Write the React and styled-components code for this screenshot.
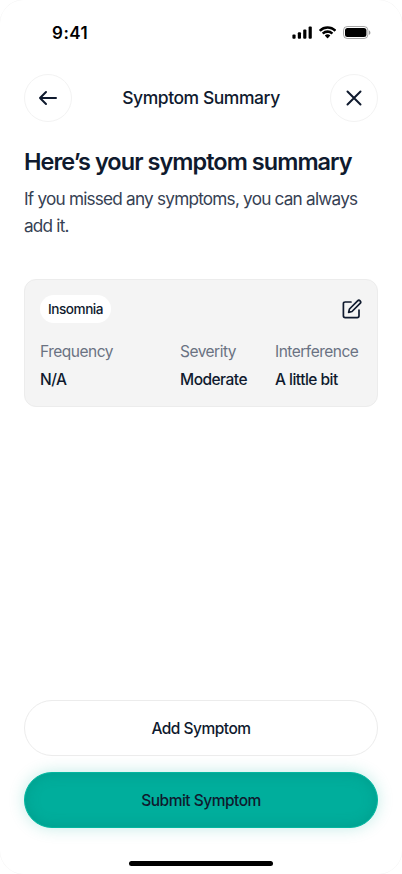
import React from "react";
import styled, { createGlobalStyle } from "styled-components";

const GlobalStyle = createGlobalStyle`
  * {
    box-sizing: border-box;
  }

  body {
    margin: 0;
    background: #ffffff;
    font-family: "Inter", sans-serif;
    color: #0f1a2e;
  }
`;

const Screen = styled.div`
  display: flex;
  flex-direction: column;
  width: 402px;
  height: 874px;
  margin: 0 auto;
  overflow: hidden;
  background: #ffffff;
  border-radius: 24px;
  box-shadow: 0 0 0 0.5px rgba(0, 0, 0, 0.04);
`;

const StatusBar = styled.div`
  display: flex;
  justify-content: space-between;
  align-items: center;
  height: 66px;
  padding: 0 31px 0 52px;
`;

const Time = styled.span`
  font-size: 17px;
  font-weight: 600;
  line-height: 22px;
  letter-spacing: 0.03em;
  color: #000000;
`;

const StatusIcons = styled.div`
  display: flex;
  align-items: center;
  gap: 7px;
  margin-top: -1px;
  color: #000000;

  svg {
    display: block;
  }
`;

const Header = styled.header`
  display: flex;
  justify-content: space-between;
  align-items: center;
  padding: 8px 24px 0;
`;

const RoundButton = styled.button`
  display: flex;
  align-items: center;
  justify-content: center;
  width: 48px;
  height: 48px;
  padding: 0;
  border: 1px solid #f3f3f3;
  border-radius: 50%;
  background: #ffffff;
  color: #0f1a2e;
`;

const Title = styled.h1`
  margin: 0;
  font-size: 17.5px;
  font-weight: 500;
  line-height: 24px;
  letter-spacing: -0.45px;
`;

const Content = styled.main`
  flex: 1;
  padding: 24px 24px 0;
`;

const Heading = styled.h2`
  margin: 0;
  font-size: 23.5px;
  font-weight: 600;
  line-height: 32px;
  letter-spacing: -0.96px;
`;

const Description = styled.p`
  margin: 7px 0 0;
  font-size: 17.2px;
  line-height: 27px;
  letter-spacing: -0.79px;
  color: #364153;
`;

const Card = styled.section`
  height: 128px;
  margin-top: 40px;
  padding: 15px;
  border: 1px solid #ececec;
  border-radius: 12px;
  background: #f4f4f4;
`;

const CardTop = styled.div`
  display: flex;
  justify-content: space-between;
  align-items: center;
`;

const Chip = styled.span`
  padding: 0 8px;
  border-radius: 14px;
  background: #ffffff;
  font-size: 13.6px;
  font-weight: 500;
  line-height: 28px;
  letter-spacing: -0.47px;
`;

const EditButton = styled.button`
  display: flex;
  padding: 0;
  border: 0;
  background: none;
  color: #0f1a2e;
`;

const Details = styled.div`
  display: grid;
  grid-template-columns: 140px 95px 1fr;
  margin-top: 17px;
`;

const Label = styled.div`
  font-size: 15.5px;
  line-height: 24px;
  letter-spacing: -0.5px;
  white-space: nowrap;
  color: #6a7282;
`;

const Value = styled.div`
  margin-top: 4px;
  font-size: 15.5px;
  font-weight: 500;
  line-height: 24px;
  letter-spacing: -0.52px;
  white-space: nowrap;
`;

const Actions = styled.div`
  display: flex;
  flex-direction: column;
  gap: 16px;
  padding: 0 24px;
`;

const ActionButton = styled.button`
  height: 56px;
  padding: 2px 0 0;
  border: 1px solid ${({ $primary }) => ($primary ? "#04b69f" : "#ececec")};
  border-radius: 28px;
  background: ${({ $primary }) => ($primary ? "#00ae9c" : "#ffffff")};
  box-shadow: ${({ $primary }) =>
    $primary
      ? "0 0 16px rgba(0, 174, 156, 0.24), inset 0 0 14px rgba(0, 110, 95, 0.26)"
      : "none"};
  color: #0f1a2e;
  font-family: inherit;
  font-size: 15.5px;
  font-weight: 500;
  line-height: 24px;
  letter-spacing: -0.5px;
`;

const HomeArea = styled.div`
  display: flex;
  justify-content: center;
  height: 46px;
  padding-top: 33px;
`;

const HomeIndicator = styled.div`
  width: 144px;
  height: 5px;
  border-radius: 3px;
  background: #000000;
`;

const details = [
  { label: "Frequency", value: "N/A" },
  { label: "Severity", value: "Moderate" },
  { label: "Interference", value: "A little bit" },
];

const SignalIcon = () => (
  <svg width="20" height="13" viewBox="0 0 20 13" fill="currentColor">
    <rect x="0.4" y="8.5" width="3.2" height="4.2" rx="1" />
    <rect x="5.8" y="6.2" width="3.2" height="6.5" rx="1" />
    <rect x="11.2" y="3.4" width="3.2" height="9.3" rx="1" />
    <rect x="16.6" y="0.4" width="3.2" height="12.3" rx="1" />
  </svg>
);

const WifiIcon = () => (
  <svg width="17" height="13" viewBox="0 0 17 12.3" fill="currentColor">
    <path d="M8.57 2.47c2.49 0 4.88.95 6.68 2.65.14.13.35.13.49 0l1.3-1.3a.36.36 0 0 0 0-.52 12.3 12.3 0 0 0-16.94 0 .36.36 0 0 0 0 .52l1.3 1.3c.14.13.35.13.49 0a9.7 9.7 0 0 1 6.68-2.65Z" />
    <path d="M8.57 6.58c1.36 0 2.67.5 3.67 1.41.14.13.36.13.49 0l1.3-1.31a.37.37 0 0 0 0-.53 7.96 7.96 0 0 0-10.91 0 .37.37 0 0 0 0 .53l1.3 1.31c.13.13.35.13.49 0a5.45 5.45 0 0 1 3.66-1.41Z" />
    <path d="M11.12 9.48a.36.36 0 0 0-.01-.53 3.98 3.98 0 0 0-5.09 0 .36.36 0 0 0-.01.53l2.3 2.31a.36.36 0 0 0 .51 0l2.3-2.31Z" />
  </svg>
);

const BatteryIcon = () => (
  <svg width="28" height="13" viewBox="0 0 28 13">
    <rect x="0.5" y="0.5" width="24.4" height="12" rx="3.8" fill="none" stroke="#000000" strokeOpacity="0.35" />
    <rect x="2" y="2" width="21.4" height="9" rx="2.5" fill="#000000" />
    <path d="M26 4.6v4.1c.8-.35 1.4-1.15 1.4-2.05S26.8 4.95 26 4.6Z" fill="#000000" fillOpacity="0.4" />
  </svg>
);

const BackIcon = () => (
  <svg width="24" height="24" viewBox="0 0 24 24" fill="none" stroke="currentColor" strokeWidth="2" strokeLinecap="round" strokeLinejoin="round">
    <path d="M10 18l-6-6 6-6M4 12h16" />
  </svg>
);

const CloseIcon = () => (
  <svg width="24" height="24" viewBox="0 0 24 24" fill="none" stroke="currentColor" strokeWidth="2" strokeLinecap="round">
    <path d="M5.5 5.5l13 13M18.5 5.5l-13 13" />
  </svg>
);

const EditIcon = () => (
  <svg width="20" height="20" viewBox="0 0 20 20" fill="none" stroke="currentColor" strokeWidth="1.7" strokeLinecap="round" strokeLinejoin="round">
    <path d="M9 3H3.2C2 3 1.4 3.6 1.4 4.8v12c0 1.2.6 1.8 1.8 1.8h12c1.2 0 1.8-.6 1.8-1.8V11" />
    <path d="M15.6 1.9a1.75 1.75 0 0 1 2.5 2.5L10 12.5 6.6 13.4l.9-3.4 8.1-8.1Z" />
  </svg>
);

const App = () => {
  return (
    <>
      <GlobalStyle />
      <Screen>
        <StatusBar>
          <Time>9:41</Time>
          <StatusIcons>
            <SignalIcon />
            <WifiIcon />
            <BatteryIcon />
          </StatusIcons>
        </StatusBar>
        <Header>
          <RoundButton aria-label="Back">
            <BackIcon />
          </RoundButton>
          <Title>Symptom Summary</Title>
          <RoundButton aria-label="Close">
            <CloseIcon />
          </RoundButton>
        </Header>
        <Content>
          <Heading>Here’s your symptom summary</Heading>
          <Description>If you missed any symptoms, you can always add it.</Description>
          <Card>
            <CardTop>
              <Chip>Insomnia</Chip>
              <EditButton aria-label="Edit">
                <EditIcon />
              </EditButton>
            </CardTop>
            <Details>
              {details.map((item) => (
                <div key={item.label}>
                  <Label>{item.label}</Label>
                  <Value>{item.value}</Value>
                </div>
              ))}
            </Details>
          </Card>
        </Content>
        <Actions>
          <ActionButton>Add Symptom</ActionButton>
          <ActionButton $primary>Submit Symptom</ActionButton>
        </Actions>
        <HomeArea>
          <HomeIndicator />
        </HomeArea>
      </Screen>
    </>
  );
};

export default App;
